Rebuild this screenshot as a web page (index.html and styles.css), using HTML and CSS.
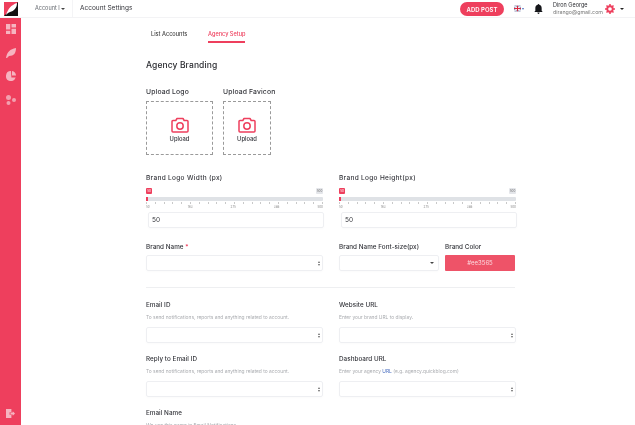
FILE: index.html
```html
<!DOCTYPE html>
<html lang="en">
<head>
<meta charset="utf-8">
<title>Account Settings</title>
<link rel="stylesheet" href="styles.css">
</head>
<body>
<div class="app">
  <header class="topbar">
    <div class="logo"><svg viewBox="0 0 14 14" width="14" height="14"><rect width="14" height="14" fill="#111"/><path d="M0 0h14L0 14z" fill="#ee3f5d"/><path d="M2 13C4 7 7 3 13 1c0 5-3 8-7 9l-2 1z" fill="#fff"/></svg></div>
    <div class="account">Account I <span class="caret"></span></div>
    <div class="page-title">Account Settings</div>
    <div class="top-right">
      <button class="add-post">ADD POST</button>
      <div class="flag"><svg viewBox="0 0 10 8" width="7" height="7"><rect width="10" height="8" fill="#2b3f7e"/><path d="M0 0l10 8M10 0L0 8" stroke="#fff" stroke-width="1.6"/><path d="M5 0v8M0 4h10" stroke="#fff" stroke-width="3"/><path d="M5 0v8M0 4h10" stroke="#d8283f" stroke-width="1.6"/></svg><span class="flag-caret"></span></div>
      <svg class="bell" viewBox="0 0 10 12" width="9" height="10"><path d="M5 0c.5 0 1 .4 1 1 2 .5 2.800 2 2.800 4v3L10 9.500H0L1.200 8V5C1.200 3 2 1.500 4 1c0-.6.500-1 1-1zM3.700 10.300h2.600C6.300 11.200 5.700 12 5 12s-1.300-.8-1.300-1.700z" fill="#15161a"/></svg>
      <div class="user"><div class="user-name">Diron George</div><div class="user-mail">dirango@gmail.com</div></div>
      <svg class="gear" viewBox="0 0 12 12" width="10" height="10"><circle cx="6" cy="6" r="3.300" fill="none" stroke="#ee3f5d" stroke-width="2.200"/><path d="M6 0v2.500M6 9.500V12M0 6h2.500M9.500 6H12M1.800 1.800l1.800 1.800M8.400 8.400l1.800 1.800M10.200 1.800L8.400 3.600M3.600 8.400l-1.800 1.800" stroke="#ee3f5d" stroke-width="1.800"/></svg>
      <span class="caret dark"></span>
    </div>
  </header>
  <div class="body">
    <aside class="sidebar">
      <div class="side-top">
        <svg viewBox="0 0 10 10" width="10" height="10"><path d="M0 0h4.300v5.500H0zM5.500 0H10v3.500H5.500zM0 6.700h4.300V10H0zM5.500 4.700H10V10H5.500z" fill="#f6b4c0"/></svg>
        <svg viewBox="0 0 10 10" width="10" height="10"><path d="M0 10C1 4 4 1 10 0c0 5-2 8-7 8l-2 2z" fill="#f6b4c0"/></svg>
        <svg viewBox="0 0 10 10" width="10" height="10"><path d="M5 0a5 5 0 1 0 4.700 6.600H5.400zM6 0v4.500h4A5 5 0 0 0 6 0z" fill="#f6b4c0"/></svg>
        <svg viewBox="0 0 10 10" width="10" height="10"><circle cx="2.500" cy="2.500" r="2.500" fill="#f2a0af"/><circle cx="2.500" cy="8" r="2" fill="#f2a0af"/><circle cx="8" cy="5" r="2" fill="#f2a0af"/></svg>
      </div>
      <svg class="side-exit" viewBox="0 0 10 10" width="9" height="9"><path d="M0 0h6v3.500H4v3h2V10H0z" fill="#f6b4c0"/><path d="M5 4h2.500V2.500L10 5 7.500 7.500V6H5z" fill="#f6b4c0"/></svg>
    </aside>
    <main class="main">
      <nav class="tabs">
        <a class="tab">List Accounts</a>
        <a class="tab active">Agency Setup</a>
      </nav>
      <h1 class="title">Agency Branding</h1>
      <div class="uploads">
        <div class="upload-col logo-col">
          <div class="label strong">Upload Logo</div>
          <div class="upload-box">
            <svg viewBox="0 0 18 16" width="18" height="16"><path d="M6 1.500h6l1.200 2H16a1 1 0 0 1 1 1V14a1 1 0 0 1-1 1H2a1 1 0 0 1-1-1V4.500a1 1 0 0 1 1-1h2.800z" fill="none" stroke="#ee3f5d" stroke-width="1.500" stroke-linejoin="round"/><circle cx="9" cy="9" r="3.200" fill="none" stroke="#ee3f5d" stroke-width="1.500"/></svg>
            <span>Upload</span>
          </div>
        </div>
        <div class="upload-col favicon-col">
          <div class="label strong">Upload Favicon</div>
          <div class="upload-box">
            <svg viewBox="0 0 18 16" width="18" height="16"><path d="M6 1.500h6l1.200 2H16a1 1 0 0 1 1 1V14a1 1 0 0 1-1 1H2a1 1 0 0 1-1-1V4.500a1 1 0 0 1 1-1h2.800z" fill="none" stroke="#ee3f5d" stroke-width="1.500" stroke-linejoin="round"/><circle cx="9" cy="9" r="3.200" fill="none" stroke="#ee3f5d" stroke-width="1.500"/></svg>
            <span>Upload</span>
          </div>
        </div>
      </div>

      <div class="two sliders">
        <div class="slider-field">
          <div class="label wide">Brand Logo Width (px)</div>
          <div class="bubbles"><span class="bubble">50</span><span class="bubble max">500</span></div>
          <div class="track"><span class="handle"></span></div>
          <div class="ticks"></div>
          <div class="tick-labels"><span>50</span><span>163</span><span>275</span><span>388</span><span>500</span></div>
          <div class="input value">50</div>
        </div>
        <div class="slider-field">
          <div class="label wide">Brand Logo Height(px)</div>
          <div class="bubbles"><span class="bubble">50</span><span class="bubble max">500</span></div>
          <div class="track"><span class="handle"></span></div>
          <div class="ticks"></div>
          <div class="tick-labels"><span>50</span><span>163</span><span>275</span><span>388</span><span>500</span></div>
          <div class="input value">50</div>
        </div>
      </div>

      <div class="two brand-row">
        <div>
          <div class="label">Brand Name <span class="req">*</span></div>
          <div class="input spin"><span class="spinner"></span></div>
        </div>
        <div class="brand-right">
          <div class="font-col">
            <div class="label">Brand Name Font-size(px)</div>
            <div class="input select"><span class="caret dark"></span></div>
          </div>
          <div class="color-col">
            <div class="label">Brand Color</div>
            <div class="color-btn">#ee3565</div>
          </div>
        </div>
      </div>

      <hr class="rule">

      <div class="two fields">
        <div>
          <div class="label">Email ID</div>
          <p class="hint">To send notifications, reports and anything related to account.</p>
          <div class="input spin"><span class="spinner"></span></div>
        </div>
        <div>
          <div class="label">Website URL</div>
          <p class="hint">Enter your brand URL to display.</p>
          <div class="input spin"><span class="spinner"></span></div>
        </div>
        <div>
          <div class="label">Reply to Email ID</div>
          <p class="hint">To send notifications, reports and anything related to account.</p>
          <div class="input spin"><span class="spinner"></span></div>
        </div>
        <div>
          <div class="label">Dashboard URL</div>
          <p class="hint">Enter your agency <a class="link">URL</a> (e.g. agency.quickblog.com)</p>
          <div class="input spin"><span class="spinner"></span></div>
        </div>
        <div>
          <div class="label">Email Name</div>
          <p class="hint">We use this name in Email Notifications.</p>
        </div>
      </div>
    </main>
  </div>
</div>
</body>
</html>
```
FILE: styles.css
```css
* { box-sizing: border-box; }
html, body { margin: 0; height: 100%; overflow: hidden; background: #fff; }
body { font-family: Inter, "Liberation Sans", sans-serif; color: #2a2b30; }
.app { width: 635px; height: 425px; display: flex; flex-direction: column; overflow: hidden; filter: blur(.35px); }

.topbar { height: 18px; flex: none; display: flex; align-items: center; border-bottom: 1px solid #f3f3f5; }
.logo { width: 21px; height: 17px; display: flex; align-items: center; justify-content: center; padding-left: 1px; }
.account { margin-left: 14px; width: 37px; font-size: 5.500px; color: #666a70; white-space: nowrap; height: 17px; line-height: 17px; }
.page-title { padding-left: 7px; border-left: 1px solid #f4f4f6; font-size: 6.500px; color: #33343a; line-height: 17px; }
.caret { display: inline-block; width: 0; height: 0; border: 2px solid transparent; border-top: 2px solid #444; border-bottom: 0; vertical-align: middle; }
.top-right { margin-left: auto; display: flex; align-items: center; height: 17px; }
.add-post { width: 44px; height: 14px; margin-top: 1px; border: 0; border-radius: 7px; background: #ee3f5d; color: #fff; font: 600 6px Inter, sans-serif; padding: 0; }
.flag { margin-left: 10px; width: 12px; display: flex; align-items: center; gap: 1px; }
.flag-caret { width: 0; height: 0; border: 1.500px solid transparent; border-top: 2px solid #4a6fc0; border-bottom: 0; }
.bell { margin-left: 8px; }
.user { margin-left: 10px; width: 51px; }
.user-name { font-size: 5.500px; line-height: 7px; color: #2a2b30; white-space: nowrap; }
.user-mail { font-size: 5.300px; line-height: 7px; color: #777; white-space: nowrap; }
.gear { margin-left: 1px; }
.top-right .caret.dark { margin: 0 11px 0 5px; border-top-color: #222; }

.body { flex: 1; display: flex; min-height: 0; }
.sidebar { width: 21px; flex: none; background: #ee3f5d; display: flex; flex-direction: column; align-items: center; padding: 6px 0 7px; justify-content: space-between; }
.side-top { display: flex; flex-direction: column; gap: 13.700px; }
.side-top svg { display: block; }
.side-exit { display: block; }

.main { flex: 1; min-width: 0; padding: 0 120px 0 125px; overflow: hidden; }
.tabs { display: flex; height: 25px; margin-left: 5px; gap: 20px; }
.tab { font-size: 5.600px; font-weight: 500; height: 25px; padding-top: 12px; line-height: 8px; color: #444; width: 37px; white-space: nowrap; border-bottom: 2px solid transparent; }
.tab.active { color: #ee3f5d; border-bottom-color: #ee3f5d; }
.title { margin: 16px 0 0; font-size: 8.500px; font-weight: 500; line-height: 12px; color: #2a2b30; letter-spacing: .1px; }

.label { font-size: 6.300px; line-height: 9px; color: #33343a; font-weight: 500; white-space: nowrap; letter-spacing: .05px; }
.label.strong { font-size: 6.800px; letter-spacing: .15px; }
.label.wide { font-size: 6.500px; letter-spacing: .32px; }
.uploads { display: flex; gap: 10px; margin-top: 16px; }
.logo-col .upload-box { width: 67px; }
.favicon-col .upload-box { width: 48px; }
.upload-box { margin-top: 5px; height: 54px; border: 1px dashed #9a9a9a; display: flex; flex-direction: column; align-items: center; justify-content: center; gap: 2px; font-size: 5.800px; font-weight: 500; color: #33343a; padding-top: 2px; }

.two { display: grid; grid-template-columns: 177px 177px; column-gap: 16px; }
.sliders { margin-top: 19px; }
.bubbles { display: flex; justify-content: space-between; margin-top: 5px; height: 6px; }
.bubble { width: 6px; height: 6px; background: #ee3f5d; color: #fff; border-radius: 1px; font-size: 3px; line-height: 6px; text-align: center; }
.bubble.max { width: 7px; background: #e4e6ea; color: #777; }
.track { position: relative; height: 4px; margin-top: 3px; background: #dfe2e6; border-radius: 1px; }
.handle { position: absolute; left: 0; top: 0; width: 2px; height: 4px; background: #ee3f5d; }
.ticks { height: 2px; margin-top: 1px; background: repeating-linear-gradient(90deg, #c9c9c9 0 1px, transparent 1px 8.800px); }
.tick-labels { display: flex; justify-content: space-between; height: 4px; margin-top: 1px; font-size: 3px; line-height: 4px; color: #8a8a8a; }
.input { height: 16px; border: 1px solid #eeeff2; border-radius: 2px; background: #fff; display: flex; align-items: center; box-shadow: 0 1px 2px rgba(0,0,0,.02); }
.input.value { width: 176px; margin: 3px 0 0 2px; padding-left: 3px; font-size: 6.500px; color: #33343a; }
.spin, .select { margin-top: 3px; justify-content: flex-end; }
.spinner { display: flex; flex-direction: column; gap: 1px; margin-right: 2px; }
.spinner::before, .spinner::after { content: ""; width: 0; height: 0; border: 1.500px solid transparent; }
.spinner::before { border-top: 0; border-bottom: 2.500px solid #666; }
.spinner::after { border-bottom: 0; border-top: 2.500px solid #666; }
.select .caret.dark { margin: 0 4px 0 0; border-top-color: #444; }
.req { color: #ee3f5d; }
.brand-row { margin-top: 15px; }
.brand-right { display: flex; gap: 6px; }
.font-col { width: 100px; }
.color-col { width: 70px; }
.color-btn { margin-top: 3px; height: 16px; background: #ee5368; color: #fbd9df; border-radius: 1px; font-size: 6px; line-height: 16px; text-align: center; }
.rule { margin: 16px 0 0; border: 0; border-top: 1px solid #eeeff1; }
.fields { margin-top: 13px; row-gap: 12px; }
.hint { margin: 4px 0 0; font-size: 4.880px; line-height: 7px; color: #aaacb0; white-space: nowrap; }
.fields .spin { margin-top: 6px; }
.link { color: #4a6fc0; }
```
